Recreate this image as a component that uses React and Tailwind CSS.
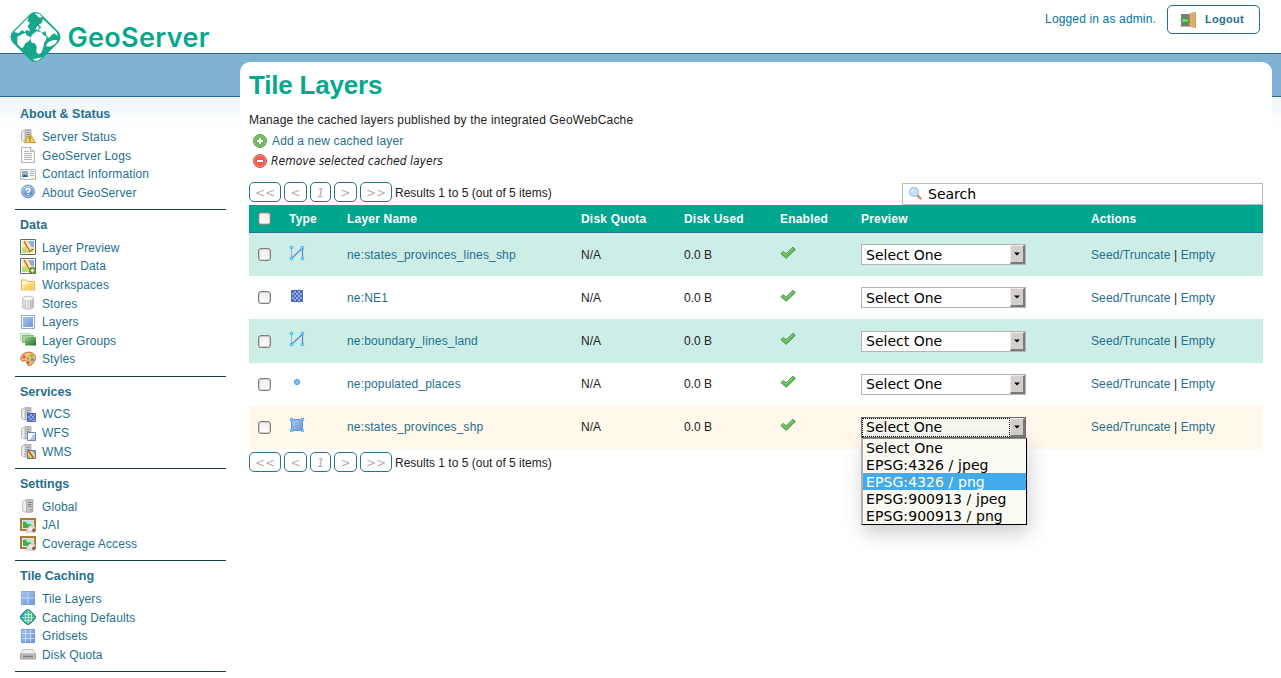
import React from "react";

const Svg = ({ children, w = 16, h = 16, className = "", viewBox }) => (
  <svg width={w} height={h} viewBox={viewBox || `0 0 ${w} ${h}`} className={`block shrink-0 ${className}`}>
    {children}
  </svg>
);

const Defs = () => (
  <svg width="0" height="0" className="absolute">
    <defs>
      <linearGradient id="blue" x1="0" y1="0" x2="1" y2="1">
        <stop offset="0" stopColor="#a9c9f0" />
        <stop offset="1" stopColor="#6f93da" />
      </linearGradient>
      <linearGradient id="steel" x1="0" y1="0" x2="1" y2="0">
        <stop offset="0" stopColor="#d8d8d8" />
        <stop offset="0.5" stopColor="#f4f4f4" />
        <stop offset="1" stopColor="#a8a8a8" />
      </linearGradient>
      <linearGradient id="green" x1="0" y1="0" x2="1" y2="1">
        <stop offset="0" stopColor="#9ad09a" />
        <stop offset="1" stopColor="#1f701f" />
      </linearGradient>
      <linearGradient id="gold" x1="0" y1="0" x2="1" y2="1">
        <stop offset="0" stopColor="#fff3b0" />
        <stop offset="1" stopColor="#f0c030" />
      </linearGradient>
      <radialGradient id="help" cx="0.4" cy="0.3" r="0.8">
        <stop offset="0" stopColor="#a9c8ee" />
        <stop offset="1" stopColor="#3f6cb4" />
      </radialGradient>
      <linearGradient id="globe" x1="0" y1="0" x2="1" y2="0">
        <stop offset="0" stopColor="#12a8b4" />
        <stop offset="0.5" stopColor="#4fc4a8" />
        <stop offset="1" stopColor="#3fa060" />
      </linearGradient>
    </defs>
  </svg>
);

const ServerBase = () => (
  <>
    <path d="M1.500 3.500 5 1.500h6v10.500L8.500 14H5l-3.500-1.500z" fill="#d6d6d6" stroke="#b9b9b9" />
    <path d="M3.200 3.500v9" stroke="#efefef" strokeWidth="1.600" />
    <path d="M5.500 2.500h5v11h-5z" fill="#cfcfcf" stroke="#adadad" strokeWidth=".8" />
    <path d="M6.500 4.500h3M6.500 6.500h3M6.500 8.500h3" stroke="#858585" strokeWidth=".9" />
  </>
);

const MapBase = () => (
  <>
    <path d="M.5.5h15v15H.5z" fill="#fff" stroke="#5a6e5a" />
    <path d="M2 2h12v12H2z" fill="#f4ee98" />
    <path d="M8 2h6v6.500l-3-1z" fill="#8ab0ea" />
    <path d="M2 9l4-1 3 6H2z" fill="#b9dc78" />
    <path d="M2 2h3l2 4-5 2z" fill="#e8efc0" />
    <path d="M4 2l6 10.500M9 13l4.500-3" stroke="#e24a35" strokeWidth="1.300" fill="none" />
  </>
);

const PhotoGear = () => (
  <Svg>
    <path d="M1 2h14v11H1z" fill="#e6f0f8" stroke="#b07b2c" strokeWidth="2" />
    <path d="M2.500 3.500h11v4h-11z" fill="#a8def8" />
    <path d="M3 8V5l2-.5 3 3 2-.5 2.500 2v2H3z" fill="#4cab3c" />
    <circle cx="11" cy="5" r="1.300" fill="#f5e35a" />
    <path d="M6.500 13c1-1 2-4 4-4.500 2 .5 3.500 0 4.500 1v6h-4c-1-1-3.500 0-4.500 0z" fill="#dedede" stroke="#b5b5b5" strokeWidth=".6" />
    <path d="M9.500 11h3v1.500h-3z" fill="#fff" />
    <circle cx="13.800" cy="13.200" r="1.700" fill="#a0562d" />
  </Svg>
);

const icons = {
  status: (
    <Svg>
      <ServerBase />
      <path d="M10 5.800 15.400 14.600H4.600z" fill="#fbd65f" stroke="#cc9428" />
      <path d="M10 8.500v3M10 12.300v1.200" stroke="#6e4a00" strokeWidth="1.100" />
    </Svg>
  ),
  page: (
    <Svg>
      <path d="M1.500.5h9l4 4v11h-13z" fill="#fafafa" stroke="#b4b4b4" />
      <path d="M10.500.5v4h4" fill="#e6e6e6" stroke="#b4b4b4" />
      <path d="M4 4.500h5M4 6.500h8M4 8.500h8M4 10.500h8M4 12.500h8" stroke="#b4b4b4" />
    </Svg>
  ),
  card: (
    <Svg>
      <path d="M.5 3.500h15v10h-2v-1h-1.500v1h-8v-1h-1.500v1h-2z" fill="#f7f7f7" stroke="#b8b8b8" />
      <path d="M2 5h6v6H2z" fill="#74b4f0" />
      <circle cx="5" cy="7.200" r="1.600" fill="#e0a060" />
      <path d="M2.500 11c0-3 5-3 5 0z" fill="#2c5f98" />
      <path d="M10 5.500h4M10 7.500h4M10 9.500h4" stroke="#a8b4c8" />
    </Svg>
  ),
  help: (
    <Svg>
      <circle cx="8" cy="7.500" r="6.500" fill="url(#help)" stroke="#7c9cc8" />
      <circle cx="8" cy="7.500" r="5.300" fill="none" stroke="#c9dbf2" strokeWidth=".8" />
      <path d="M6.200 6.200c0-2.400 3.800-2.400 3.800 0 0 1.300-1.900 1.400-1.900 2.700M8.100 10v1.300" fill="none" stroke="#fff" strokeWidth="1.500" />
    </Svg>
  ),
  map: (
    <Svg>
      <MapBase />
    </Svg>
  ),
  mapAdd: (
    <Svg>
      <MapBase />
      <circle cx="12.500" cy="12.500" r="3.500" fill="#4f8f2b" />
      <path d="M12.500 10.500v4M10.500 12.500h4" stroke="#fff" strokeWidth="1.300" />
    </Svg>
  ),
  folder: (
    <Svg>
      <path d="M1.500 13v-10h5l1 1.500h7V13z" fill="#fff8dc" stroke="#e3b04a" />
      <path d="M3 7h4l1-1.500h5.500V12H3z" fill="url(#gold)" />
    </Svg>
  ),
  store: (
    <Svg>
      <path d="M2.500 3.500c0-3 11-3 11 0v8.500c0 3-11 3-11 0z" fill="url(#steel)" stroke="#c4c4c4" />
      <path d="M5.500 5.500v8M8 6v8M10.500 5.500v8" stroke="#c4c4c4" />
      <ellipse cx="8" cy="3.500" rx="5" ry="2" fill="#fafafa" stroke="#c4c4c4" strokeWidth=".7" />
    </Svg>
  ),
  layer: (
    <Svg>
      <path d="M1.500 1.500h13v13h-13z" fill="#fff" stroke="#8fa8d4" />
      <path d="M3 3h10v10H3z" fill="url(#blue)" />
    </Svg>
  ),
  group: (
    <Svg>
      <path d="M.5 1.500h10v7H.5z" fill="#e4f4e4" stroke="#b4deb4" />
      <path d="M2.500 3.500h11v7h-11z" fill="#a5d4a5" stroke="#7bbb7b" />
      <path d="M5 5h11v8.500H5z" fill="url(#green)" />
    </Svg>
  ),
  palette: (
    <Svg>
      <path d="M1 9C-.5 4 5 .8 9.500 1.200 14 1.500 16.500 5 15 9c-1 3-3.500 5.500-6 5.500-3 0-1-3.500-3.500-4.500C4 9.500 2 11 1 9z" fill="#eeb878" stroke="#b57436" />
      <circle cx="4" cy="6" r="1.400" fill="#e25540" />
      <circle cx="7.500" cy="3.800" r="1.400" fill="#f3d848" />
      <circle cx="11.600" cy="4.800" r="1.500" fill="#86b94a" />
      <circle cx="12.300" cy="8.500" r="1.500" fill="#4f8ed8" />
      <circle cx="8" cy="11.500" r="1.200" fill="#a8612c" />
      <circle cx="8" cy="7.500" r="1.300" fill="#d9924c" />
    </Svg>
  ),
  wcs: (
    <Svg>
      <ServerBase />
      <path d="M7.500 7.500h8v8h-8z" fill="#8fa9e2" stroke="#4b62b8" />
      <path d="M8 8h2v2H8zM12 8h2v2h-2zM10 10h2v2h-2zM14 10h1v2h-1zM8 12h2v2H8zM12 12h2v2h-2zM10 14h2v1h-2z" fill="#4f6ac4" />
    </Svg>
  ),
  wfs: (
    <Svg>
      <ServerBase />
      <path d="M7.500 7.500h8v8h-8z" fill="#fff" stroke="#6a80c0" />
      <path d="M8 15c4 0 3-5 7-6v6z" fill="#a8c4f0" />
    </Svg>
  ),
  wms: (
    <Svg>
      <ServerBase />
      <path d="M7.500 7.500h8v8h-8z" fill="#f2de62" stroke="#6070b0" />
      <path d="M12 8h3v4z" fill="#7cb4e8" />
      <path d="M8 12l3 3H8z" fill="#8cc850" />
      <path d="M8.500 8l5 7" stroke="#e04c30" strokeWidth="1.500" />
    </Svg>
  ),
  server: (
    <Svg>
      <path d="M2.500 3.500 6.500 1.500h6.500v11L11 14.500H6.500L2.500 13z" fill="#efefef" stroke="#c4c4c4" />
      <path d="M6.500 2h6v12h-6z" fill="#c8c8c8" stroke="#a5a5a5" strokeWidth=".8" />
      <path d="M8 4.500h3.500M8 6.500h3.500M8 8.500h3.500" stroke="#7f7f7f" />
      <path d="M10 11h1.500v1.500H10z" fill="#4eb840" />
    </Svg>
  ),
  photo: <PhotoGear />,
  tiles: (
    <Svg>
      <path d="M1 1h14v14H1z" fill="url(#blue)" />
      <path d="M8 1v14M1 8h14" stroke="#c7dbf8" />
      <path d="M1.500 1.500h13v13h-13z" fill="none" stroke="#7d9cdc" strokeOpacity=".6" />
    </Svg>
  ),
  globe: (
    <Svg>
      <path d="M8 .5 10.500 2l4 4L15.700 8l-1.200 2.500-4 4L8 15.700l-2.500-1.200-4-4L.3 8l1.200-2.500 4-4z" fill="url(#globe)" stroke="#138a92" />
      <path d="M4 5.500h8M2 8.500h12M4 11.500h8M5.500 4v8.500M8.500 2v12M11.500 4v8.500" stroke="#d8f4d4" strokeWidth=".8" />
    </Svg>
  ),
  grid: (
    <Svg>
      <path d="M1 1h14v14H1z" fill="url(#blue)" />
      <path d="M5.500 1v14M10.500 1v14M1 5.500h14M1 10.500h14" stroke="#c7dbf8" />
      <path d="M1.500 1.500h13v13h-13z" fill="none" stroke="#6688d4" strokeOpacity=".6" />
    </Svg>
  ),
  drive: (
    <Svg>
      <path d="M3 3.500h10l2.500 4.500v4.500h-15V8z" fill="#f0f0f0" stroke="#c0c0c0" />
      <path d="M.5 8h15v5H.5z" fill="#c4c4c4" stroke="#a0a0a0" />
      <path d="M3 10.500h10" stroke="#7d7d7d" strokeWidth="1.600" />
    </Svg>
  ),
  add: (
    <Svg>
      <circle cx="8" cy="8" r="6.500" fill="#6fb65a" stroke="#5a9f4c" />
      <circle cx="8" cy="8" r="5.400" fill="none" stroke="#a8d498" strokeWidth=".6" />
      <path d="M8 5v6M5 8h6" stroke="#fff" strokeWidth="2" />
    </Svg>
  ),
  remove: (
    <Svg>
      <circle cx="8" cy="8" r="6.500" fill="#ec5b50" stroke="#d8584c" />
      <circle cx="8" cy="8" r="5.400" fill="none" stroke="#f8a498" strokeWidth=".6" />
      <path d="M5 8h6" stroke="#fff" strokeWidth="2" />
    </Svg>
  ),
  door: (
    <Svg>
      <path d="M1 2h10v12H1z" fill="#7c7c7c" />
      <path d="M0 14.500h11" stroke="#b5b5b5" />
      <path d="M15.500.3v15.400L9.500 14V2z" fill="#e3b070" stroke="#c08a44" strokeWidth=".7" />
      <path d="M11 3.500l3-1v4.500h-3zM11 9h3v4l-3-1z" fill="#dba866" />
      <path d="M.7 8.500 5 4.700v2h4v3.600H5v2z" fill="#7fcf6c" stroke="#2f8a2c" strokeWidth=".8" />
    </Svg>
  ),
  tick: (
    <Svg>
      <path d="M.9 8.600 3.200 6.500 6 8.900 13 2.300l2.300 2.200L6.200 13.300z" fill="#66b956" stroke="#3d8b3b" strokeWidth=".9" />
      <path d="M2 8.600 3.300 7.600 6 10 13 3.500" fill="none" stroke="#9cdc8c" strokeWidth=".8" />
    </Svg>
  ),
  line: (
    <Svg>
      <path d="M2.500 3v11" stroke="#93b4e0" />
      <path d="M2.500 13.500l11-10.500M13.500 3v11" stroke="#5c84d6" strokeWidth="1.200" fill="none" />
      <circle cx="2.500" cy="2.500" r="1.300" fill="#a8e0fc" stroke="#26aef8" />
      <circle cx="13.500" cy="2.500" r="1.300" fill="#a8e0fc" stroke="#26aef8" />
      <circle cx="2.500" cy="13.500" r="1.300" fill="#a8e0fc" stroke="#26aef8" />
      <circle cx="13.500" cy="13.500" r="1.300" fill="#a8e0fc" stroke="#26aef8" />
    </Svg>
  ),
  raster: (
    <Svg>
      <path d="M2.500 2.500h11v11h-11z" fill="#93ade6" stroke="#4f68bc" />
      {[0, 1, 2, 3, 4].map((r) =>
        [0, 1, 2, 3, 4]
          .filter((c) => (r + c) % 2 === 0)
          .map((c) => <rect key={`${r}${c}`} x={3 + c * 2} y={3 + r * 2} width="2" height="2" fill="#4f68bc" />)
      )}
    </Svg>
  ),
  point: (
    <Svg>
      <circle cx="8" cy="8" r="2.600" fill="#8cbcec" stroke="#26aef8" />
    </Svg>
  ),
  polygon: (
    <Svg>
      <path d="M2.500 2.500h11v11h-11z" fill="url(#blue)" stroke="#6d8fd8" />
      <circle cx="2.500" cy="2.500" r="1.300" fill="#a8e0fc" stroke="#26aef8" />
      <circle cx="13.500" cy="2.500" r="1.300" fill="#a8e0fc" stroke="#26aef8" />
      <circle cx="2.500" cy="13.500" r="1.300" fill="#a8e0fc" stroke="#26aef8" />
      <circle cx="13.500" cy="13.500" r="1.300" fill="#a8e0fc" stroke="#26aef8" />
    </Svg>
  ),
  search: (
    <Svg>
      <path d="M9.500 9.500l3 3" stroke="#c89058" strokeWidth="2.400" strokeLinecap="round" />
      <circle cx="6" cy="6" r="4.400" fill="#c4e0fa" stroke="#a4c4ea" strokeWidth="1.200" />
      <path d="M3.500 6A2.500 2.500 0 0 1 6 3.500" stroke="#fff" fill="none" />
    </Svg>
  ),
};

const sections = [
  ["About & Status", [["status", "Server Status"], ["page", "GeoServer Logs"], ["card", "Contact Information"], ["help", "About GeoServer"]]],
  ["Data", [["map", "Layer Preview"], ["mapAdd", "Import Data"], ["folder", "Workspaces"], ["store", "Stores"], ["layer", "Layers"], ["group", "Layer Groups"], ["palette", "Styles"]]],
  ["Services", [["wcs", "WCS"], ["wfs", "WFS"], ["wms", "WMS"]]],
  ["Settings", [["server", "Global"], ["photo", "JAI"], ["photo", "Coverage Access"]]],
  ["Tile Caching", [["tiles", "Tile Layers"], ["globe", "Caching Defaults"], ["grid", "Gridsets"], ["drive", "Disk Quota"]]],
];

const rows = [
  ["line", "ne:states_provinces_lines_shp", "bg-[#cdede7]"],
  ["raster", "ne:NE1", "bg-white"],
  ["line", "ne:boundary_lines_land", "bg-[#cdede7]"],
  ["point", "ne:populated_places", "bg-white"],
  ["polygon", "ne:states_provinces_shp", "bg-[#fff8eb]"],
];

const options = ["Select One", "EPSG:4326 / jpeg", "EPSG:4326 / png", "EPSG:900913 / jpeg", "EPSG:900913 / png"];

const columns = "grid grid-cols-[31px_58px_234px_103px_96px_81px_230px_1fr] items-center pl-[9px]";

function Logo() {
  return (
    <div className="flex items-start pl-[10px] pt-[11px]">
      <Svg w={52} h={52} viewBox="30 33 156 156" className="relative z-10">
        <rect x="46.500" y="51" width="120" height="120" rx="24" transform="rotate(45 106.500 111)" fill="#17a88c" />
        <path d="M42 96 86 51l-4 12 8 5-8 12 8 8-2 6-8-4-6 6-8-6-10 10z" fill="#fff" />
        <path d="M52 110l16-8 8-4 4 8 12 6-4 10-12 8-6 12-6 2-12-12z" fill="#fff" />
        <path d="M104 39l14 3 9 9-7 2-6-3z" fill="#fff" />
        <path d="M128 56l42 40 4 12-12-8-8 6-6 8-8-6-4-14-10 4-10-8 8-8-8-8 10-6z" fill="#fff" />
        <path d="M96 104l14-10 12 2 8 8 10 6-2 10-6 8-2 14-6 16-9 5-6-8 1-16-6-9-9-2-4-12z" fill="#fff" />
        <path d="M138 138c2-12 18-20 34-18-2 12-20 24-34 18z" fill="#fff" />
        <path d="M98 178l28-6-10 9-8 2z" fill="#fff" />
        <path d="M112 78l6 4-4 8-8-2z" fill="#fff" />
      </Svg>
      <span className="ml-[5.500px] mt-[10px] font-['Inter'] text-[27px] font-semibold leading-[34px] tracking-[0.32px] text-[#06a88d]">GeoServer</span>
    </div>
  );
}

function PagerButton({ children, className }) {
  return (
    <span className={`flex h-5 items-center justify-center rounded-[5px] border border-[#2a7291] bg-white pt-px font-['DejaVu_Sans'] text-[12px] italic text-[#b0b0b0] ${className}`}>
      {children}
    </span>
  );
}

function Pager() {
  return (
    <div className="flex items-center gap-[3px]">
      <PagerButton className="w-8">&lt;&lt;</PagerButton>
      <PagerButton className="w-[23px]">&lt;</PagerButton>
      <PagerButton className="w-[21px]">1</PagerButton>
      <PagerButton className="w-[23px]">&gt;</PagerButton>
      <PagerButton className="w-8">&gt;&gt;</PagerButton>
      <span className="pt-0.5">Results 1 to 5 (out of 5 items)</span>
    </div>
  );
}

const Checkbox = () => (
  <span className="block size-[13px] rounded-[3px] border border-[#85807b] bg-linear-to-b from-[#eeeceb] to-white shadow-[inset_0_0_0_0.5px_#b0aba6]" />
);

function Select({ open }) {
  return (
    <div className="relative w-[165px] font-['DejaVu_Sans'] text-[14px] text-black">
      <div className={`flex h-[21px] border ${open ? "border-[#6e6e6e] bg-[#f7f7f0]" : "border-[#b4b4b4] bg-white"}`}>
        <span className={`flex flex-1 items-center leading-none ${open ? "border border-dotted border-black pl-[3px]" : "pl-1"}`}>Select One</span>
        <span className="flex w-[15px] items-center justify-center border-t border-l border-r-2 border-b-2 border-t-[#ece9e6] border-l-[#ece9e6] border-r-[#7c7a78] border-b-[#7c7a78] bg-[#d3d0cc]">
          <svg width="6" height="4" viewBox="0 0 6 4" className="block">
            <path d="M0 .5h6l-3 3z" fill="#000" />
          </svg>
        </span>
      </div>
      {open && (
        <div className="absolute left-0 top-[21px] z-10 w-[166px] border border-l-2 border-t-[#8c8c8c] border-r-black border-b-black border-l-[#b0b0b0] bg-[#fafaf3] shadow-[2px_8px_18px_rgba(60,60,80,0.25)]">
          {options.map((o, i) => (
            <div key={o} className={`h-[17px] pl-[3px] pt-px leading-[17px] tracking-[0.08px] whitespace-nowrap ${i === 2 ? "bg-[#43abe9] text-white" : ""}`}>
              {o}
            </div>
          ))}
        </div>
      )}
    </div>
  );
}

export default function App() {
  return (
    <div className="h-[678px] w-[1281px] overflow-hidden bg-white font-['Liberation_Sans',sans-serif] text-[12px] leading-4 text-[#222]">
      <Defs />
      <header className="flex h-[54px] justify-between border-b border-[#25708f]">
        <Logo />
        <div className="flex items-start pr-[21px] pt-[5px]">
          <span className="mr-[11px] mt-1.5 tracking-[0.15px] text-[#0076a1]">Logged in as admin.</span>
          <button className="flex h-[29px] w-[93px] items-center rounded-[5px] border border-[#25708f] pl-3 text-[11px] font-bold tracking-[0.3px] text-[#25708f]">
            {icons.door}
            <span className="ml-[9px] pb-px">Logout</span>
          </button>
        </div>
      </header>

      <div className="flex h-[624px] bg-[linear-gradient(to_bottom,#7fb2d3_0,#7fb2d3_42px,#25708f_42px,#25708f_43px,#eff5fa_43px,#ffffff_74px)]">
        <nav className="w-[240px] pl-[15px] pr-[14px] pt-[45.200px]">
          {sections.map(([title, items]) => (
            <section key={title} className="border-b border-[#14404f] pb-[7.480px]">
              <h2 className="h-7 pl-[5px] pt-[7px] text-[12.500px] font-bold text-[#25708f]">{title}</h2>
              <ul>
                {items.map(([icon, label]) => (
                  <li key={label} className="flex h-[18.600px] items-center gap-1.5 pl-[5px] tracking-[0.12px] text-[#25708f]">
                    {icons[icon]}
                    <a className="pt-px">{label}</a>
                  </li>
                ))}
              </ul>
            </section>
          ))}
        </nav>

        <main className="mr-[9px] mt-2 flex-1 rounded-t-[10px] bg-white pl-[9px] pr-[9px]">
          <h1 className="pt-2 text-[26px] font-bold leading-[31px] tracking-[-0.2px] text-[#06a88d]">Tile Layers</h1>
          <p className="mt-[11px] tracking-[0.17px]">Manage the cached layers published by the integrated GeoWebCache</p>
          <div className="mt-[3px] flex h-5 items-center gap-[4px] pl-[3px] tracking-[0.15px] text-[#25708f]">
            {icons.add}
            <span>Add a new cached layer</span>
          </div>
          <div className="flex h-5 items-center gap-[3px] pl-[3px]">
            {icons.remove}
            <span className="font-['DejaVu_Sans_Condensed','DejaVu_Sans'] italic [font-stretch:condensed]">Remove selected cached layers</span>
          </div>

          <div className="mt-[11px] flex h-[23px] items-start justify-between">
            <Pager />
            <div className="mt-px flex h-[22px] w-[361px] items-center border border-[#b9b9b9] bg-white pl-[5px] font-['DejaVu_Sans'] text-[14px] text-black">
              {icons.search}
              <span className="ml-1">Search</span>
            </div>
          </div>

          <div className={`${columns} h-7 border-b border-[#25708f] bg-[#00a78e] font-bold tracking-[0.2px] text-white`}>
            <Checkbox />
            <span>Type</span>
            <span>Layer Name</span>
            <span>Disk Quota</span>
            <span>Disk Used</span>
            <span>Enabled</span>
            <span>Preview</span>
            <span>Actions</span>
          </div>
          {rows.map(([icon, name, bg], i) => (
            <div key={name} className={`${columns} h-[43.220px] ${bg}`}>
              <Checkbox />
              <span className="pb-1">{icons[icon]}</span>
              <a className="tracking-[0.16px] text-[#25708f]">{name}</a>
              <span>N/A</span>
              <span>0.0 B</span>
              <span className="pb-1">{icons.tick}</span>
              <Select open={i === 4} />
              <span className="tracking-[0.1px]">
                <a className="text-[#25708f]">Seed/Truncate</a> | <a className="text-[#25708f]">Empty</a>
              </span>
            </div>
          ))}
          <div className="pt-[3px]">
            <Pager />
          </div>
        </main>
      </div>
    </div>
  );
}
